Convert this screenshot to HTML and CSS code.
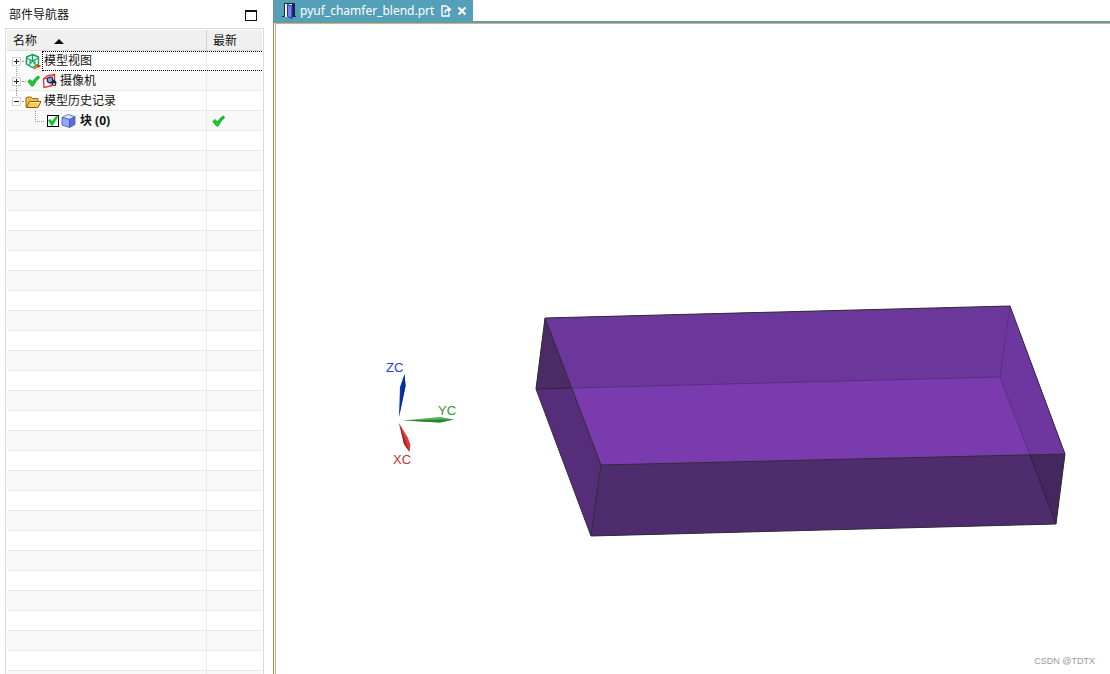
FILE: index.html
```html
<!DOCTYPE html>
<html lang="zh-CN">
<head>
<meta charset="utf-8">
<title>pyuf_chamfer_blend.prt</title>
<link rel="stylesheet" href="styles.css">
</head>
<body>
<svg class="defs" aria-hidden="true">
  <symbol id="tick" viewBox="0 0 14 14"><path d="M1 7.500 3 5.500 5.500 8Q8 3.500 11.500 2L12.500 3.500Q8.500 7 6 12L4.500 12Z" fill="#16cf2c" stroke="#0fa822" stroke-width="1"/></symbol>
</svg>
<div class="app">
  <aside class="navigator">
    <header class="nav-title">
      <h1>部件导航器</h1>
      <button class="maximize" aria-label="最大化"></button>
    </header>
    <div class="tree-panel">
      <table class="tree">
        <colgroup><col class="name-col"><col></colgroup>
        <thead>
          <tr>
            <th><span class="heading">名称<svg width="10" height="5" viewBox="0 0 10 5"><path d="M0 5 5 0 10 5Z" fill="#111"/></svg></span></th>
            <th>最新</th>
          </tr>
        </thead>
        <tbody id="tree-rows">
          <tr class="focused">
            <td><div class="node">
              <div class="gutter below"><button class="expander plus" aria-label="展开"></button></div>
              <svg class="icon" width="17" height="17" viewBox="0 0 17 17" fill="none"><path d="M7.500 1.500 13.500 4V11L7.500 14.500 1.500 11V4Z" fill="#f4fcf8" stroke="#0aa05a" stroke-width="1.400"/><path d="M7.500 1.500V8M1.500 5 7.500 8 13.500 5M4 12.500 7.500 8 11 12.500M5 7V11.500M10 7V11.500" stroke="#0aa05a" stroke-width="1.100"/><path d="M8.500 16 13 13.500" stroke="#ef5b20" stroke-width="1.600"/><path d="M11.500 12 16 12 14 15Z" fill="#e8331c"/></svg>
              <span class="label">模型视图</span>
            </div></td>
            <td></td>
          </tr>
          <tr>
            <td><div class="node">
              <div class="gutter above below"><button class="expander plus" aria-label="展开"></button></div>
              <svg class="icon lead" width="14" height="14"><use href="#tick"/></svg>
              <svg class="icon" width="16" height="16" viewBox="0 0 16 16" fill="none"><path d="M1.500 6 5.500 2.500 12.500 1.500V10L9 13 2 14.500Z" fill="#fff" stroke="#e42d24" stroke-width="1.300"/><path d="M1.500 6 9 4.500 12.500 1.500M9 4.500V13" stroke="#e42d24"/><circle cx="8" cy="7" r="2.800" fill="#8da2dc" stroke="#222f70" stroke-width="1.300"/><path d="M9 9 12 6.500 14.500 9 14 12.500 11 13Z" fill="#22242e"/><circle cx="12" cy="11" r="1.100" fill="#dce4ff"/></svg>
              <span class="label">摄像机</span>
            </div></td>
            <td></td>
          </tr>
          <tr>
            <td><div class="node">
              <div class="gutter above"><button class="expander" aria-label="折叠"></button></div>
              <svg class="icon folder" width="17" height="16" viewBox="0 0 17 16"><path d="M1 13V4L2 3H6L7.500 4.500H13V7.500L4 13Z" fill="#edc04c" stroke="#9b6a13"/><path d="M1.500 13.500 4.500 7.500H16L13 13.500Z" fill="#f8cb50" stroke="#8d5d0b"/><path d="M5 8.500H14.500" stroke="#fff3b5"/></svg>
              <span class="label">模型历史记录</span>
            </div></td>
            <td></td>
          </tr>
          <tr>
            <td><div class="node">
              <div class="branch"></div>
              <input class="check" type="checkbox" id="block" checked>
              <svg class="icon" width="16" height="16" viewBox="0 0 16 16" stroke="#4858b8" stroke-width=".8" stroke-linejoin="round"><path d="M1 4.500 6.500 1.500 14 3.500 8.500 6.500Z" fill="#dce5ff"/><path d="M1 4.500 8.500 6.500V14.500L1 12Z" fill="#93a8fa"/><path d="M8.500 6.500 14 3.500V11.500L8.500 14.500Z" fill="#5a6ddb"/></svg>
              <label class="label strong" for="block">块 (0)</label>
            </div></td>
            <td><svg class="status" width="14" height="14"><use href="#tick"/></svg></td>
          </tr>
        </tbody>
      </table>
    </div>
  </aside>
  <main class="workspace">
    <nav class="tabs">
      <div class="tab">
        <svg width="16" height="16" viewBox="0 0 16 16"><path d="M3 1H12V14H3Z" fill="#f4f6f8"/><path d="M0 13.500H2.500V.5H12.500V13.500H14" fill="none" stroke="#23262e"/><path d="M10 1H12V14H10Z" fill="#1d1e58"/><path d="M5.500 1.500 10 3V15.500L5.500 13.500Z" fill="#7486ee" stroke="#2a2fa8"/></svg>
        <a href="#part">pyuf_chamfer_blend.prt</a>
        <svg width="11" height="12" viewBox="0 0 11 12" fill="none" stroke="#fff" stroke-width="1.400"><path d="M6 1H1V11H8V8M4 8 4.500 5.500 7 4.500"/><path d="M6 .5 10.500 4.500 7 8Z" fill="#fff" stroke="none"/></svg>
        <button class="close" aria-label="关闭"><svg width="10" height="10" viewBox="0 0 10 10"><path d="M1.500 1.500 8.500 8.500M8.500 1.500 1.500 8.500" stroke="#fff" stroke-width="2.200"/></svg></button>
      </div>
    </nav>
    <section class="viewport" id="part">
      <svg class="scene" viewBox="276 24 834 650" preserveAspectRatio="xMinYMin meet">
        <path d="M545 318 1010 306 1065 454 1056 524 591 536 536 389Z" fill="#552d79"/>
        <path d="M545 318 1010 306 1000 377 572 388Z" fill="#6c379a"/>
        <path d="M572 388 1000 377 1030 455 601 465Z" fill="#7a3baf"/>
        <path d="M1010 306 1065 454 1030 455 1000 377Z" fill="#6e379f"/>
        <path d="M545 318 572 388 536 389Z" fill="#4a2b66"/>
        <path d="M601 465 1030 455 1056 524 591 536Z" fill="#4f2c6e"/>
        <path d="M1030 455 1065 454 1056 524Z" fill="#44275e"/>
        <g fill="none" stroke-linejoin="round">
          <path d="M572 388 1000 377 1010 306M1000 377 1030 455" stroke="#5c2e86"/>
          <path d="M536 389 572 388M1030 455 1056 524" stroke="#321d46"/>
          <path d="M545 318 1010 306 1065 454 1056 524 591 536 536 389ZM545 318 601 465 1065 454M601 465 591 536" stroke="#302e35"/>
        </g>
        <path d="M399 417 400 387 404.500 374 405.500 386Z" fill="#0a35bb"/>
        <path d="M399 417 402.500 387 404.500 374 405.500 386Z" fill="#082b91"/>
        <path d="M403 420.500 440 417 454 419.500 440 422.500Z" fill="#4eb552"/>
        <path d="M403 420.500 454 419.500 440 422.500Z" fill="#287f2d"/>
        <path d="M399 423 408 438 410.500 445 409.500 452 404 444Z" fill="#d83a3a"/>
        <path d="M399 423 404 444 409.500 452Z" fill="#9e2329"/>
        <g class="axis">
          <text x="386" y="372" fill="#1d43dc">ZC</text>
          <text x="438" y="415" fill="#329338">YC</text>
          <text x="393" y="464" fill="#cb2f36">XC</text>
        </g>
      </svg>
      <span class="watermark">CSDN @TDTX</span>
    </section>
  </main>
</div>
<script src="rows.js"></script>
</body>
</html>
```
FILE: styles.css
```css
* { box-sizing: border-box; }
body {
  margin: 0;
  background: #fff;
  color: #111;
  font: 12px/18px "Noto Sans", "Noto Sans CJK SC", sans-serif;
}
button { padding: 0; border: 0; background: none; }
.defs { position: absolute; width: 0; height: 0; }
.app { display: flex; height: 100vh; overflow: hidden; }

.navigator {
  display: flex;
  flex: 0 0 273px;
  flex-direction: column;
  padding: 0 9px 0 5px;
}
.nav-title {
  display: flex;
  flex: 0 0 28px;
  align-items: center;
  justify-content: space-between;
  padding: 2px 7px 0 4px;
}
.nav-title h1 { margin: 0; font-size: 12px; font-weight: 400; }
.maximize { width: 12px; height: 11px; border: 1px solid #111; border-top-width: 2px; }
.tree-panel {
  flex: 1;
  min-height: 0;
  overflow: hidden;
  padding: 1px 1px 0;
  border: 1px solid #dadada;
  border-bottom: 0;
}
.tree { width: 100%; border-spacing: 0; table-layout: fixed; }
.name-col { width: 200px; }
.tree th {
  height: 21px;
  padding: 2px 6px 0;
  border-bottom: 1px solid #dadada;
  background: #f0f0f0;
  font-weight: 400;
  line-height: 18px;
  text-align: left;
}
.tree th:first-child { border-right: 1px solid #d0d0d0; }
.heading { display: flex; align-items: center; gap: 17px; }
.tree td { height: 20px; padding: 0; border-bottom: 1px solid #ebebeb; line-height: 18px; }
.tree td:first-child { border-right: 1px solid #ebebeb; }
.tree tbody tr:nth-child(even) { background: #f9f9f9; }
.node { display: flex; align-items: center; height: 19px; }
.icon { flex: none; }
.icon.lead { margin: 0 1px 0 2px; }
.icon.folder { margin-top: 3px; }
.label { flex: 1; padding-left: 2px; white-space: nowrap; }
.strong { padding-left: 3px; font-weight: 700; }
.status { display: block; margin-left: 5px; }
.tree .focused td:last-child { border-top: 1px dotted #000; border-bottom: 1px dotted #000; }
.tree .focused td:first-child { border-bottom: 0; }
.focused .node { height: 20px; }
.focused .label {
  height: 20px;
  padding-left: 1px;
  border: 1px dotted #000;
  border-right: 0;
}

.gutter {
  position: relative;
  display: flex;
  flex: 0 0 18px;
  align-items: center;
  height: 19px;
  padding: 1px 0 0 5px;
}
.gutter::before,
.gutter::after { position: absolute; left: 9px; height: 5px; border-left: 1px dotted #999; }
.gutter.above::before { top: 0; content: ""; }
.gutter.below::after { bottom: -1px; content: ""; }
.expander {
  position: relative;
  width: 9px;
  height: 9px;
  border: 1px solid #d4d4d4;
  background: linear-gradient(#222, #222) center / 5px 1px no-repeat #fff;
}
.expander::after {
  position: absolute;
  top: 3px;
  left: 9px;
  width: 4px;
  border-top: 1px dotted #999;
  content: "";
}
.plus {
  background:
    linear-gradient(#222, #222) center / 5px 1px no-repeat,
    linear-gradient(#222, #222) center / 1px 5px no-repeat #fff;
}
.branch {
  flex: 0 0 9px;
  height: 11px;
  margin: 0 3px 8px 28px;
  border-bottom: 1px dotted #999;
  border-left: 1px dotted #999;
}
.check {
  flex: none;
  width: 12px;
  height: 12px;
  margin: 0 2px 0 0;
  border: 1px solid #000;
  appearance: none;
  background: #fff;
}
.check:checked::after {
  display: block;
  height: 10px;
  background: #12c42a;
  clip-path: polygon(0 50%, 20% 35%, 40% 55%, 85% 0, 100% 15%, 48% 100%, 32% 100%);
  content: "";
}

.workspace {
  display: flex;
  flex: 1;
  flex-direction: column;
  min-width: 0;
  border-left: 1px solid #888;
}
.tabs { display: flex; flex: 0 0 23px; border-bottom: 2px solid #54a0b8; }
.tab {
  display: flex;
  align-items: center;
  height: 21px;
  padding: 0 6px 0 8px;
  background: #54a0b8;
}
.tab a { margin: 0 7px 0 2px; color: #fff; text-decoration: none; }
.tab svg { display: block; }
.close { margin-left: 5px; }
.viewport {
  position: relative;
  flex: 1;
  min-height: 0;
  margin-left: 1px;
  border-top: 1px solid #f0a860;
  border-left: 1px solid #f0a860;
}
.scene { display: block; width: 100%; height: 100%; }
.axis { font: 13px "Liberation Sans", Arial, sans-serif; }
.watermark {
  position: absolute;
  right: 15px;
  bottom: 4px;
  color: #999;
  font: 9px/18px "Liberation Sans", Arial, sans-serif;
}
```
FILE: rows.js
```
const body = document.getElementById("tree-rows");
for (let i = 0; i < 60; i++) {
  const row = body.insertRow();
  row.insertCell();
  row.insertCell();
}
```
